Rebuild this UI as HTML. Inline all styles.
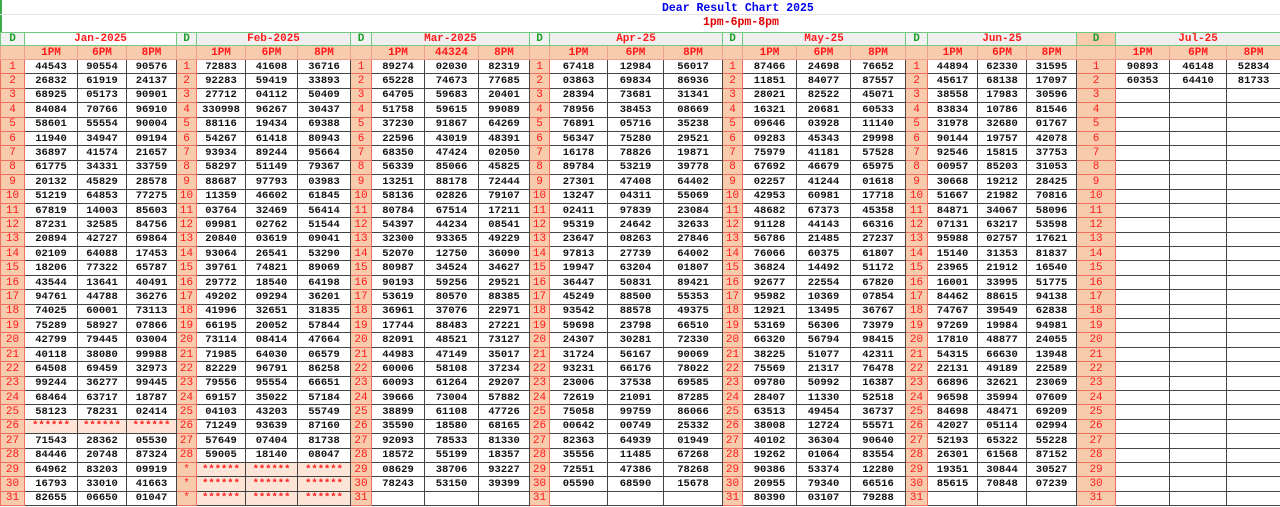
<!DOCTYPE html>
<html><head><meta charset="utf-8"><style>
html,body{margin:0;padding:0;background:#fff;}
body{width:1280px;height:507px;overflow:hidden;position:relative;font-family:"Liberation Mono",monospace;}
.t1{position:absolute;top:2px;left:662px;color:#0000ee;font-weight:bold;font-size:11.5px;}
.t2{position:absolute;top:16px;left:703px;color:#e00000;font-weight:bold;font-size:11.5px;}
.gl{position:absolute;left:0;width:2px;background:#3cab4c;}
.hl{position:absolute;left:0;right:0;height:1px;background:#e4e4e4;}
table{position:absolute;top:32px;left:0;width:1280px;border-collapse:collapse;table-layout:fixed;}
td{border:1px solid #444;padding:0;text-align:center;font-size:10.5px;font-weight:bold;color:#111;height:13.4px;line-height:12px;overflow:hidden;white-space:nowrap;}
tr.h1 td{background:#efefef;color:#ff1a1a;border:1px solid #6fc97e;height:12px;font-size:11px;}
tr.h1 td:nth-child(odd){color:#1aa02a;background:#f2f2f2;}
tr.h2 td{background:#f8cbad;color:#ff1a1a;border:1px solid #f0a090;height:13px;font-size:11px;}
tr.r td:nth-child(4n+1){background:#f8cbad;color:#ff1a1a;border-color:#f07060;font-size:11px;font-weight:normal;}
td.s{background:#fce4d6;color:#ff1a1a;}
</style></head><body>
<div class="gl" style="top:0;height:32px"></div>
<div class="hl" style="top:14px"></div>
<div class="t1">Dear Result Chart 2025</div>
<div class="t2">1pm-6pm-8pm</div>
<table>
<colgroup>
<col style="width:24px"><col style="width:53px"><col style="width:49px"><col style="width:50px">
<col style="width:20px"><col style="width:49px"><col style="width:52px"><col style="width:53px">
<col style="width:21px"><col style="width:53px"><col style="width:54px"><col style="width:51px">
<col style="width:20px"><col style="width:58px"><col style="width:56px"><col style="width:59px">
<col style="width:20px"><col style="width:54px"><col style="width:54px"><col style="width:55px">
<col style="width:22px"><col style="width:50px"><col style="width:49px"><col style="width:50px">
<col style="width:39px"><col style="width:54px"><col style="width:57px"><col style="width:54px">
</colgroup>
<tr class="h1"><td>D</td><td colspan="3" style="color:#ff1a1a;background:#fff">Jan-2025</td><td>D</td><td colspan="3" style="color:#ff1a1a;background:#efefef">Feb-2025</td><td>D</td><td colspan="3" style="color:#ff1a1a;background:#efefef">Mar-2025</td><td>D</td><td colspan="3" style="color:#ff1a1a;background:#efefef">Apr-25</td><td>D</td><td colspan="3" style="color:#ff1a1a;background:#efefef">May-25</td><td>D</td><td colspan="3" style="color:#ff1a1a;background:#efefef">Jun-25</td><td style="background:#f8cbad">D</td><td colspan="3" style="color:#ff1a1a;background:#efefef">Jul-25</td></tr>
<tr class="h2"><td></td><td>1PM</td><td>6PM</td><td>8PM</td><td></td><td>1PM</td><td>6PM</td><td>8PM</td><td></td><td>1PM</td><td>44324</td><td>8PM</td><td></td><td>1PM</td><td>6PM</td><td>8PM</td><td></td><td>1PM</td><td>6PM</td><td>8PM</td><td></td><td>1PM</td><td>6PM</td><td>8PM</td><td></td><td>1PM</td><td>6PM</td><td>8PM</td></tr>
<tr class="r"><td>1</td><td>44543</td><td>90554</td><td>90576</td><td>1</td><td>72883</td><td>41608</td><td>36716</td><td>1</td><td>89274</td><td>02030</td><td>82319</td><td>1</td><td>67418</td><td>12984</td><td>56017</td><td>1</td><td>87466</td><td>24698</td><td>76652</td><td>1</td><td>44894</td><td>62330</td><td>31595</td><td>1</td><td>90893</td><td>46148</td><td>52834</td></tr>
<tr class="r"><td>2</td><td>26832</td><td>61919</td><td>24137</td><td>2</td><td>92283</td><td>59419</td><td>33893</td><td>2</td><td>65228</td><td>74673</td><td>77685</td><td>2</td><td>03863</td><td>69834</td><td>86936</td><td>2</td><td>11851</td><td>84077</td><td>87557</td><td>2</td><td>45617</td><td>68138</td><td>17097</td><td>2</td><td>60353</td><td>64410</td><td>81733</td></tr>
<tr class="r"><td>3</td><td>68925</td><td>05173</td><td>90901</td><td>3</td><td>27712</td><td>04112</td><td>50409</td><td>3</td><td>64705</td><td>59683</td><td>20401</td><td>3</td><td>28394</td><td>73681</td><td>31341</td><td>3</td><td>28021</td><td>82522</td><td>45071</td><td>3</td><td>38558</td><td>17983</td><td>30596</td><td>3</td><td></td><td></td><td></td></tr>
<tr class="r"><td>4</td><td>84084</td><td>70766</td><td>96910</td><td>4</td><td>330998</td><td>96267</td><td>30437</td><td>4</td><td>51758</td><td>59615</td><td>99089</td><td>4</td><td>78956</td><td>38453</td><td>08669</td><td>4</td><td>16321</td><td>20681</td><td>60533</td><td>4</td><td>83834</td><td>10786</td><td>81546</td><td>4</td><td></td><td></td><td></td></tr>
<tr class="r"><td>5</td><td>58601</td><td>55554</td><td>90004</td><td>5</td><td>88116</td><td>19434</td><td>69388</td><td>5</td><td>37230</td><td>91867</td><td>64269</td><td>5</td><td>76891</td><td>05716</td><td>35238</td><td>5</td><td>09646</td><td>03928</td><td>11140</td><td>5</td><td>31978</td><td>32680</td><td>01767</td><td>5</td><td></td><td></td><td></td></tr>
<tr class="r"><td>6</td><td>11940</td><td>34947</td><td>09194</td><td>6</td><td>54267</td><td>61418</td><td>80943</td><td>6</td><td>22596</td><td>43019</td><td>48391</td><td>6</td><td>56347</td><td>75280</td><td>29521</td><td>6</td><td>09283</td><td>45343</td><td>29998</td><td>6</td><td>90144</td><td>19757</td><td>42078</td><td>6</td><td></td><td></td><td></td></tr>
<tr class="r"><td>7</td><td>36897</td><td>41574</td><td>21657</td><td>7</td><td>93934</td><td>89244</td><td>95664</td><td>7</td><td>68350</td><td>47424</td><td>02050</td><td>7</td><td>16178</td><td>78826</td><td>19871</td><td>7</td><td>75979</td><td>41181</td><td>57528</td><td>7</td><td>92546</td><td>15815</td><td>37753</td><td>7</td><td></td><td></td><td></td></tr>
<tr class="r"><td>8</td><td>61775</td><td>34331</td><td>33759</td><td>8</td><td>58297</td><td>51149</td><td>79367</td><td>8</td><td>56339</td><td>85066</td><td>45825</td><td>8</td><td>89784</td><td>53219</td><td>39778</td><td>8</td><td>67692</td><td>46679</td><td>65975</td><td>8</td><td>00957</td><td>85203</td><td>31053</td><td>8</td><td></td><td></td><td></td></tr>
<tr class="r"><td>9</td><td>20132</td><td>45829</td><td>28578</td><td>9</td><td>88687</td><td>97793</td><td>03983</td><td>9</td><td>13251</td><td>88178</td><td>72444</td><td>9</td><td>27301</td><td>47408</td><td>64402</td><td>9</td><td>02257</td><td>41244</td><td>01618</td><td>9</td><td>30668</td><td>19212</td><td>28425</td><td>9</td><td></td><td></td><td></td></tr>
<tr class="r"><td>10</td><td>51219</td><td>64853</td><td>77275</td><td>10</td><td>11359</td><td>46602</td><td>61845</td><td>10</td><td>58136</td><td>02826</td><td>79107</td><td>10</td><td>13247</td><td>04311</td><td>55069</td><td>10</td><td>42953</td><td>60981</td><td>17718</td><td>10</td><td>51667</td><td>21982</td><td>70816</td><td>10</td><td></td><td></td><td></td></tr>
<tr class="r"><td>11</td><td>67819</td><td>14003</td><td>85603</td><td>11</td><td>03764</td><td>32469</td><td>56414</td><td>11</td><td>80784</td><td>67514</td><td>17211</td><td>11</td><td>02411</td><td>97839</td><td>23084</td><td>11</td><td>48682</td><td>67373</td><td>45358</td><td>11</td><td>84871</td><td>34067</td><td>58096</td><td>11</td><td></td><td></td><td></td></tr>
<tr class="r"><td>12</td><td>87231</td><td>32585</td><td>84756</td><td>12</td><td>09981</td><td>02762</td><td>51544</td><td>12</td><td>54397</td><td>44234</td><td>08541</td><td>12</td><td>95319</td><td>24642</td><td>32633</td><td>12</td><td>91128</td><td>44143</td><td>66316</td><td>12</td><td>07131</td><td>63217</td><td>53598</td><td>12</td><td></td><td></td><td></td></tr>
<tr class="r"><td>13</td><td>20894</td><td>42727</td><td>69864</td><td>13</td><td>20840</td><td>03619</td><td>09041</td><td>13</td><td>32300</td><td>93365</td><td>49229</td><td>13</td><td>23647</td><td>08263</td><td>27846</td><td>13</td><td>56786</td><td>21485</td><td>27237</td><td>13</td><td>95988</td><td>02757</td><td>17621</td><td>13</td><td></td><td></td><td></td></tr>
<tr class="r"><td>14</td><td>02109</td><td>64088</td><td>17453</td><td>14</td><td>93064</td><td>26541</td><td>53290</td><td>14</td><td>52070</td><td>12750</td><td>36090</td><td>14</td><td>97813</td><td>27739</td><td>64002</td><td>14</td><td>76066</td><td>60375</td><td>61807</td><td>14</td><td>15140</td><td>31353</td><td>81837</td><td>14</td><td></td><td></td><td></td></tr>
<tr class="r"><td>15</td><td>18206</td><td>77322</td><td>65787</td><td>15</td><td>39761</td><td>74821</td><td>89069</td><td>15</td><td>80987</td><td>34524</td><td>34627</td><td>15</td><td>19947</td><td>63204</td><td>01807</td><td>15</td><td>36824</td><td>14492</td><td>51172</td><td>15</td><td>23965</td><td>21912</td><td>16540</td><td>15</td><td></td><td></td><td></td></tr>
<tr class="r"><td>16</td><td>43544</td><td>13641</td><td>40491</td><td>16</td><td>29772</td><td>18540</td><td>64198</td><td>16</td><td>90193</td><td>59256</td><td>29521</td><td>16</td><td>36447</td><td>50831</td><td>89421</td><td>16</td><td>92677</td><td>22554</td><td>67820</td><td>16</td><td>16001</td><td>33995</td><td>51775</td><td>16</td><td></td><td></td><td></td></tr>
<tr class="r"><td>17</td><td>94761</td><td>44788</td><td>36276</td><td>17</td><td>49202</td><td>09294</td><td>36201</td><td>17</td><td>53619</td><td>80570</td><td>88385</td><td>17</td><td>45249</td><td>88500</td><td>55353</td><td>17</td><td>95982</td><td>10369</td><td>07854</td><td>17</td><td>84462</td><td>88615</td><td>94138</td><td>17</td><td></td><td></td><td></td></tr>
<tr class="r"><td>18</td><td>74025</td><td>60001</td><td>73113</td><td>18</td><td>41996</td><td>32651</td><td>31835</td><td>18</td><td>36961</td><td>37076</td><td>22971</td><td>18</td><td>93542</td><td>88578</td><td>49375</td><td>18</td><td>12921</td><td>13495</td><td>36767</td><td>18</td><td>74767</td><td>39549</td><td>62838</td><td>18</td><td></td><td></td><td></td></tr>
<tr class="r"><td>19</td><td>75289</td><td>58927</td><td>07866</td><td>19</td><td>66195</td><td>20052</td><td>57844</td><td>19</td><td>17744</td><td>88483</td><td>27221</td><td>19</td><td>59698</td><td>23798</td><td>66510</td><td>19</td><td>53169</td><td>56306</td><td>73979</td><td>19</td><td>97269</td><td>19984</td><td>94981</td><td>19</td><td></td><td></td><td></td></tr>
<tr class="r"><td>20</td><td>42799</td><td>79445</td><td>03004</td><td>20</td><td>73114</td><td>08414</td><td>47664</td><td>20</td><td>82091</td><td>48521</td><td>73127</td><td>20</td><td>24307</td><td>30281</td><td>72330</td><td>20</td><td>66320</td><td>56794</td><td>98415</td><td>20</td><td>17810</td><td>48877</td><td>24055</td><td>20</td><td></td><td></td><td></td></tr>
<tr class="r"><td>21</td><td>40118</td><td>38080</td><td>99988</td><td>21</td><td>71985</td><td>64030</td><td>06579</td><td>21</td><td>44983</td><td>47149</td><td>35017</td><td>21</td><td>31724</td><td>56167</td><td>90069</td><td>21</td><td>38225</td><td>51077</td><td>42311</td><td>21</td><td>54315</td><td>66630</td><td>13948</td><td>21</td><td></td><td></td><td></td></tr>
<tr class="r"><td>22</td><td>64508</td><td>69459</td><td>32973</td><td>22</td><td>82229</td><td>96791</td><td>86258</td><td>22</td><td>60006</td><td>58108</td><td>37234</td><td>22</td><td>93231</td><td>66176</td><td>78022</td><td>22</td><td>75569</td><td>21317</td><td>76478</td><td>22</td><td>22131</td><td>49189</td><td>22589</td><td>22</td><td></td><td></td><td></td></tr>
<tr class="r"><td>23</td><td>99244</td><td>36277</td><td>99445</td><td>23</td><td>79556</td><td>95554</td><td>66651</td><td>23</td><td>60093</td><td>61264</td><td>29207</td><td>23</td><td>23006</td><td>37538</td><td>69585</td><td>23</td><td>09780</td><td>50992</td><td>16387</td><td>23</td><td>66896</td><td>32621</td><td>23069</td><td>23</td><td></td><td></td><td></td></tr>
<tr class="r"><td>24</td><td>68464</td><td>63717</td><td>18787</td><td>24</td><td>69157</td><td>35022</td><td>57184</td><td>24</td><td>39666</td><td>73004</td><td>57882</td><td>24</td><td>72619</td><td>21091</td><td>87285</td><td>24</td><td>28407</td><td>11330</td><td>52518</td><td>24</td><td>96598</td><td>35994</td><td>07609</td><td>24</td><td></td><td></td><td></td></tr>
<tr class="r"><td>25</td><td>58123</td><td>78231</td><td>02414</td><td>25</td><td>04103</td><td>43203</td><td>55749</td><td>25</td><td>38899</td><td>61108</td><td>47726</td><td>25</td><td>75058</td><td>99759</td><td>86066</td><td>25</td><td>63513</td><td>49454</td><td>36737</td><td>25</td><td>84698</td><td>48471</td><td>69209</td><td>25</td><td></td><td></td><td></td></tr>
<tr class="r"><td>26</td><td class="s">******</td><td class="s">******</td><td class="s">******</td><td>26</td><td>71249</td><td>93639</td><td>87160</td><td>26</td><td>35590</td><td>18580</td><td>68165</td><td>26</td><td>00642</td><td>00749</td><td>25332</td><td>26</td><td>38008</td><td>12724</td><td>55571</td><td>26</td><td>42027</td><td>05114</td><td>02994</td><td>26</td><td></td><td></td><td></td></tr>
<tr class="r"><td>27</td><td>71543</td><td>28362</td><td>05530</td><td>27</td><td>57649</td><td>07404</td><td>81738</td><td>27</td><td>92093</td><td>78533</td><td>81330</td><td>27</td><td>82363</td><td>64939</td><td>01949</td><td>27</td><td>40102</td><td>36304</td><td>90640</td><td>27</td><td>52193</td><td>65322</td><td>55228</td><td>27</td><td></td><td></td><td></td></tr>
<tr class="r"><td>28</td><td>84446</td><td>20748</td><td>87324</td><td>28</td><td>59005</td><td>18140</td><td>08047</td><td>28</td><td>18572</td><td>55199</td><td>18357</td><td>28</td><td>35556</td><td>11485</td><td>67268</td><td>28</td><td>19262</td><td>01064</td><td>83554</td><td>28</td><td>26301</td><td>61568</td><td>87152</td><td>28</td><td></td><td></td><td></td></tr>
<tr class="r"><td>29</td><td>64962</td><td>83203</td><td>09919</td><td>*</td><td class="s">******</td><td class="s">******</td><td class="s">******</td><td>29</td><td>08629</td><td>38706</td><td>93227</td><td>29</td><td>72551</td><td>47386</td><td>78268</td><td>29</td><td>90386</td><td>53374</td><td>12280</td><td>29</td><td>19351</td><td>30844</td><td>30527</td><td>29</td><td></td><td></td><td></td></tr>
<tr class="r"><td>30</td><td>16793</td><td>33010</td><td>41663</td><td>*</td><td class="s">******</td><td class="s">******</td><td class="s">******</td><td>30</td><td>78243</td><td>53150</td><td>39399</td><td>30</td><td>05590</td><td>68590</td><td>15678</td><td>30</td><td>20955</td><td>79340</td><td>66516</td><td>30</td><td>85615</td><td>70848</td><td>07239</td><td>30</td><td></td><td></td><td></td></tr>
<tr class="r"><td>31</td><td>82655</td><td>06650</td><td>01047</td><td>*</td><td class="s">******</td><td class="s">******</td><td class="s">******</td><td>31</td><td></td><td></td><td></td><td>31</td><td></td><td></td><td></td><td>31</td><td>80390</td><td>03107</td><td>79288</td><td>31</td><td></td><td></td><td></td><td>31</td><td></td><td></td><td></td></tr>
</table>
</body></html>
